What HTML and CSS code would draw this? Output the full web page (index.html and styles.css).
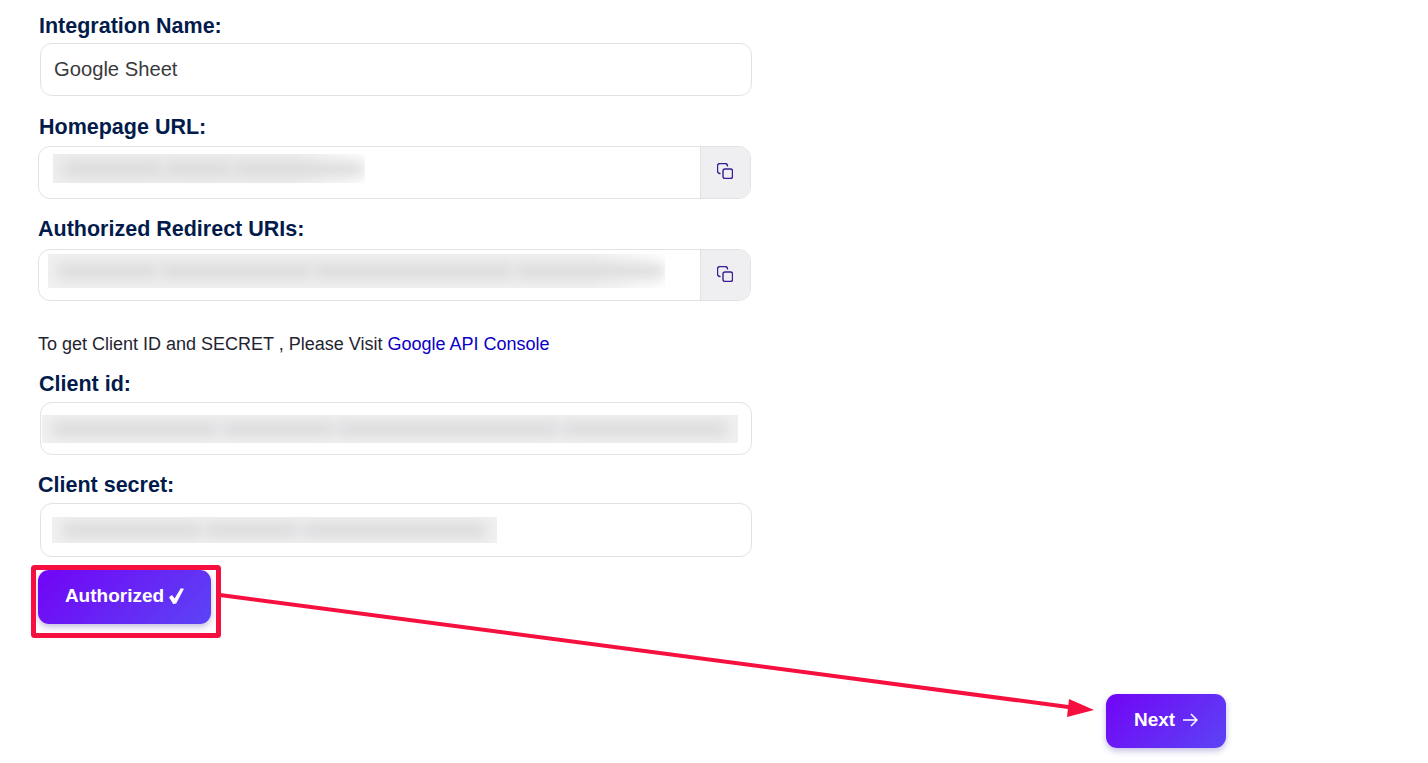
FILE: index.html
```html
<!DOCTYPE html>
<html lang="en">
<head>
    <meta charset="UTF-8">
    <meta name="viewport" content="width=device-width, initial-scale=1.0">
    <title>Integration</title>
    <link rel="stylesheet" href="styles.css">
</head>
<body>
    <form class="form">
        <label class="label">Integration Name:</label>
        <div class="box box-plain box-first">Google Sheet</div>

        <label class="label label-url label-home">Homepage URL:</label>
        <div class="box box-group">
            <div class="box-value">
                <div class="redact redact-home">
                    <span class="smear smear-a"></span>
                    <span class="smear smear-b"></span>
                    <span class="smear smear-c"></span>
                </div>
            </div>
            <button type="button" class="copy-btn">
                <svg class="copy-icon" viewBox="0 0 16 16"><rect x="6" y="6" width="9.5" height="9.5" rx="2"/><path d="M3.5 10.5h-.6A2.4 2.4 0 0 1 .5 8.1V2.9A2.4 2.4 0 0 1 2.9.5h5.2a2.4 2.4 0 0 1 2.4 2.4v.6"/></svg>
            </button>
        </div>

        <label class="label label-url">Authorized Redirect URIs:</label>
        <div class="box box-group box-short">
            <div class="box-value">
                <div class="redact redact-redirect">
                    <span class="smear smear-b"></span>
                    <span class="smear smear-a"></span>
                    <span class="smear smear-c"></span>
                    <span class="smear smear-a"></span>
                </div>
            </div>
            <button type="button" class="copy-btn">
                <svg class="copy-icon" viewBox="0 0 16 16"><rect x="6" y="6" width="9.5" height="9.5" rx="2"/><path d="M3.5 10.5h-.6A2.4 2.4 0 0 1 .5 8.1V2.9A2.4 2.4 0 0 1 2.9.5h5.2a2.4 2.4 0 0 1 2.4 2.4v.6"/></svg>
            </button>
        </div>

        <p class="note">To get Client ID and SECRET , Please Visit <a href="#">Google API Console</a></p>

        <label class="label label-client">Client id:</label>
        <div class="box box-plain box-client">
            <div class="redact redact-id">
                <span class="smear smear-a"></span>
                <span class="smear smear-b"></span>
                <span class="smear smear-c"></span>
                <span class="smear smear-a"></span>
            </div>
        </div>

        <label class="label label-secret">Client secret:</label>
        <div class="box box-plain box-secret">
            <div class="redact redact-secret">
                <span class="smear smear-a"></span>
                <span class="smear smear-b"></span>
                <span class="smear smear-c"></span>
            </div>
        </div>

        <button type="button" class="btn btn-auth">Authorized
            <svg class="check-icon" viewBox="0 0 15 16"><path d="M0 9.2 3 7l2.6 3.6L11.8.3 15 .8 7.2 15.6 4.2 16z"/></svg>
        </button>

        <button type="button" class="btn btn-next">Next
            <svg class="next-icon" viewBox="0 0 16 16"><path d="M1 8h14M9 2l6 6-6 6"/></svg>
        </button>
    </form>

    <!-- red annotation drawn over the page -->
    <svg class="annotation" viewBox="0 0 1428 763">
        <rect x="33.5" y="567.5" width="185" height="68" rx="1"/>
        <line x1="220" y1="595" x2="1072" y2="707.5"/>
        <polygon points="1094,710 1069,699 1067,717"/>
    </svg>
</body>
</html>
```

FILE: styles.css
```css
body {
    margin: 0;
    padding: 0;
    font-family: "Liberation Sans", Arial, sans-serif;
    background-color: #fff;
    position: relative;
    height: 763px;
    overflow: hidden;
}

.form {
    display: flex;
    flex-direction: column;
    align-items: flex-start;
    padding: 14px 0 0 38px;
}

.label {
    font-size: 21.5px;
    font-weight: bold;
    line-height: 24px;
    color: #021b4b;
    padding-left: 1px;
}

.label-url {
    padding-left: 0;
    margin-top: 18px;
}

.label-home {
    padding-left: 1px;
    margin-top: 19px;
}

.label-client {
    margin-top: 16px;
}

.label-secret {
    padding-left: 0;
    margin-top: 18px;
}

.box {
    display: flex;
    align-items: center;
    box-sizing: border-box;
    height: 53px;
    border: 1px solid #e2e2e4;
    border-radius: 12px;
    background-color: #fff;
}

.box-plain {
    width: 712px;
    margin-left: 2px;
    margin-top: 5px;
    font-size: 20.2px;
    color: #3a3a3c;
}

.box-first {
    padding-left: 13px;
}

.box-group {
    width: 713px;
    margin-top: 7px;
    overflow: hidden;
}

.box-short {
    height: 52px;
    margin-top: 8px;
}

.box-client,
.box-secret {
    margin-top: 6px;
}

.box-secret {
    height: 54px;
}

.box-value {
    flex: 1;
    display: flex;
    align-items: center;
}

.copy-btn {
    display: flex;
    align-items: center;
    justify-content: center;
    width: 50px;
    height: 100%;
    padding: 0 2px 3px 0;
    border: none;
    border-left: 1px solid #e2e2e4;
    background-color: #efeff1;
}

.copy-icon {
    width: 16px;
    height: 16px;
    fill: none;
    stroke: #3c1c94;
    stroke-width: 1.4;
}

/* blurred out values */
.redact {
    display: flex;
    gap: 4px;
    align-items: center;
    overflow: hidden;
    padding: 0 10px;
    box-sizing: border-box;
    background-color: #f1f1f2;
}

.redact-home {
    width: 312px;
    height: 29px;
    margin: 0 0 8px 14px;
    padding-right: 0;
    background: linear-gradient(90deg, #eeeeee 0%, #eeeeee 78%, #fff 100%);
}

.redact-redirect {
    width: 617px;
    height: 34px;
    margin: 0 0 8px 9px;
    padding-right: 0;
    background: linear-gradient(90deg, #f0f0f0 0%, #f0f0f0 88%, #fff 100%);
}

.redact-id {
    width: 696px;
    height: 28px;
    margin-left: 1px;
}

.redact-secret {
    width: 445px;
    height: 26px;
    margin-left: 11px;
}

.smear {
    display: block;
    height: 14px;
    background-color: #d9d9db;
    filter: blur(7px);
}

.smear-a {
    flex: 3;
}

.smear-b {
    flex: 2;
}

.smear-c {
    flex: 4;
}

.note {
    margin: 31px 0 0 0;
    font-size: 18px;
    line-height: 24px;
    color: #1f2430;
}

.note a {
    color: #0b00c8;
    text-decoration: none;
}

.btn {
    display: flex;
    align-items: center;
    justify-content: center;
    height: 54px;
    padding: 0 0 2px;
    border: none;
    border-radius: 11px;
    color: #fff;
    font-family: "Liberation Sans", Arial, sans-serif;
    font-size: 19px;
    font-weight: bold;
    background: linear-gradient(135deg, #7204f6, #5c44f5);
    box-shadow: 0 3px 6px rgba(60, 40, 160, 0.3);
}

.btn-auth {
    width: 173px;
    margin-top: 13px;
    gap: 5px;
}

.check-icon {
    width: 15px;
    height: 16px;
    fill: #fff;
}

.btn-next {
    width: 120px;
    margin: 70px 0 0 1068px;
    gap: 7px;
}

.next-icon {
    width: 16px;
    height: 16px;
    fill: none;
    stroke: #fff;
    stroke-width: 1.5;
}

.annotation {
    position: absolute;
    top: 0;
    left: 0;
    width: 1428px;
    height: 763px;
    pointer-events: none;
}

.annotation rect {
    fill: none;
    stroke: #f5103f;
    stroke-width: 5;
}

.annotation line {
    stroke: #f5103f;
    stroke-width: 4;
}

.annotation polygon {
    fill: #f5103f;
}
```
